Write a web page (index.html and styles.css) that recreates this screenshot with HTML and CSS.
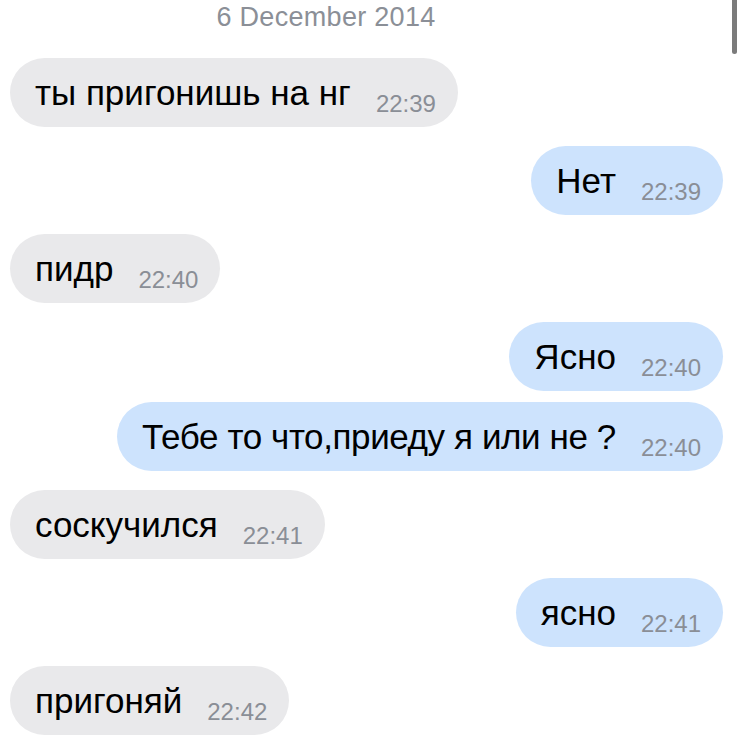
FILE: index.html
```html
<!DOCTYPE html>
<html>

<head>
    <title>Chat</title>
    <link rel="stylesheet" href="styles.css">
</head>

<body>
    <div class="scrollbar"></div>
    <div class="chat">
        <div class="date">6 December 2014</div>

        <div class="msg in"><span class="text">ты пригонишь на нг</span><span class="time">22:39</span></div>
        <div class="msg out"><span class="text">Нет</span><span class="time">22:39</span></div>
        <div class="msg in"><span class="text">пидр</span><span class="time">22:40</span></div>
        <div class="msg out"><span class="text">Ясно</span><span class="time">22:40</span></div>
        <div class="msg out next"><span class="text narrow">Тебе то что,приеду я или не ?</span><span class="time">22:40</span></div>
        <div class="msg in"><span class="text">соскучился</span><span class="time">22:41</span></div>
        <div class="msg out"><span class="text">ясно</span><span class="time">22:41</span></div>
        <div class="msg in"><span class="text">пригоняй</span><span class="time">22:42</span></div>
    </div>
</body>

</html>
```

FILE: styles.css
```css
body {
    margin: 0;
    padding: 0;
    background-color: #fff;
    font-family: "Liberation Sans", Arial, sans-serif;
    overflow: hidden;
}

.chat {
    display: flex;
    flex-direction: column;
    padding: 0 18px 0 10px;
}

.date {
    height: 58px;
    box-sizing: border-box;
    padding: 2px 81px 0 0;
    text-align: center;
    font-size: 27px;
    letter-spacing: 0.3px;
    line-height: 30px;
    color: #8b8f97;
}

/* Bubbles */
.msg {
    display: block;
    height: 69px;
    line-height: 69px;
    padding: 0 22px 0 25px;
    border-radius: 35px;
    white-space: nowrap;
    margin-bottom: 19px;
    color: #000;
}

.msg.in {
    align-self: flex-start;
    background-color: #e9e9eb;
}

.msg.out {
    align-self: flex-end;
    background-color: #cde3fd;
}

.msg.next {
    margin-top: -8px;
}

.text {
    font-size: 35px;
}

.text.narrow {
    letter-spacing: -0.4px;
}

.time {
    display: inline-block;
    margin-left: 25px;
    font-size: 24px;
    line-height: normal;
    vertical-align: -7px;
    color: #8a8e96;
}

/* Scroll indicator */
.scrollbar {
    position: absolute;
    top: 0;
    right: 4px;
    width: 5px;
    height: 54px;
    border-radius: 0 0 3px 3px;
    background-color: #7b7b7b;
}
```
